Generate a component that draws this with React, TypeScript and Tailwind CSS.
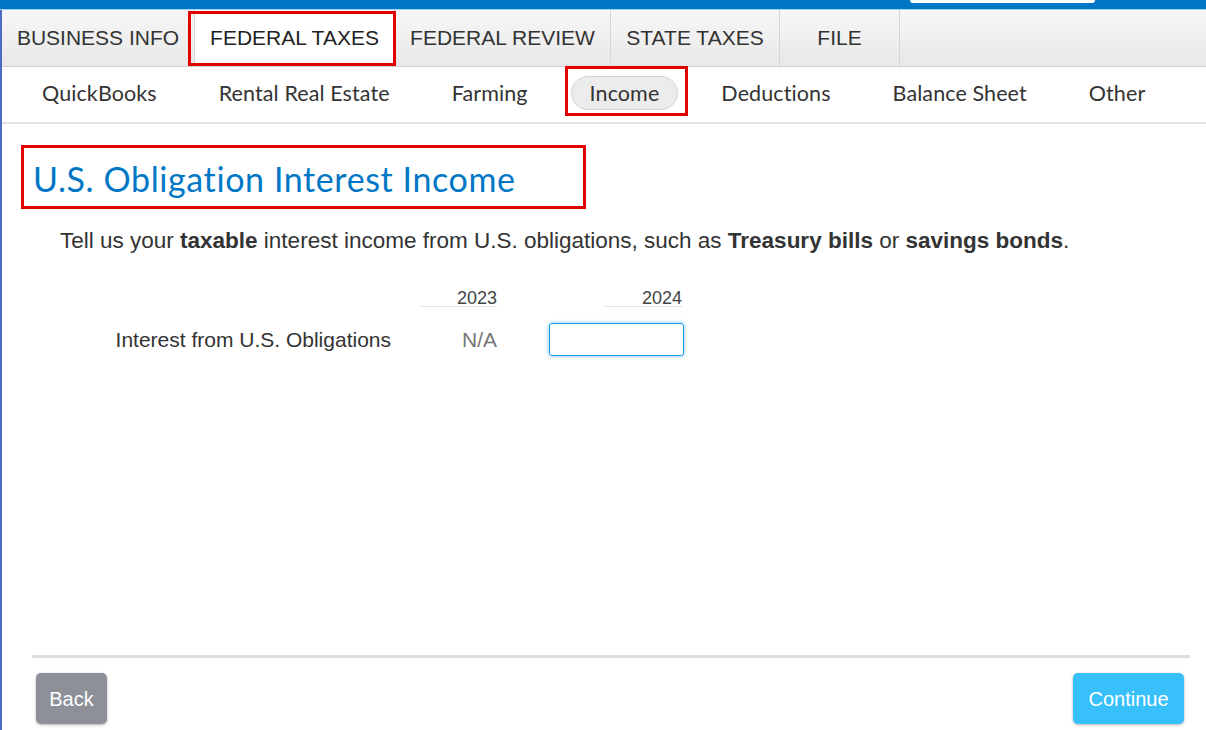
import React from "react";

const tabs = [
  { label: "BUSINESS INFO", w: "w-[193px]" },
  { label: "FEDERAL TAXES", w: "w-[200px]", active: true },
  { label: "FEDERAL REVIEW", w: "w-[216px]" },
  { label: "STATE TAXES", w: "w-[169px]" },
  { label: "FILE", w: "w-[120px]" },
];

const subNav = [
  "QuickBooks",
  "Rental Real Estate",
  "Farming",
  "Income",
  "Deductions",
  "Balance Sheet",
  "Other",
];

export default function App() {
  return (
    <div className="relative h-[730px] w-full overflow-hidden bg-white font-['Liberation_Sans',Arial,sans-serif] text-[#333]">
      {/* top bar */}
      <div className="relative h-[9px] bg-[#0077c5]">
        <div className="absolute left-[910px] top-0 h-[3px] w-[185px] rounded-b-md bg-white" />
      </div>
      <div className="h-px bg-[#a6d3f2]" />

      <div className="flex h-[720px] flex-col border-l-2 border-[#4a6dbf]">
        {/* main tabs */}
        <div className="flex h-[57px] border-b border-[#d2d2d2] bg-gradient-to-b from-[#f7f7f7] to-[#e8e8e8]">
          {tabs.map((t) => (
            <div
              key={t.label}
              className={`relative flex items-center justify-center border-r border-[#d6d6d6] text-[21px] ${t.w} ${
                t.active ? "bg-white text-[#222]" : "text-[#333]"
              }`}
            >
              {t.label}
              {t.active && (
                <div className="absolute -left-[7px] right-[-2px] top-px bottom-0 border-[3px] border-[#e00000]" />
              )}
            </div>
          ))}
        </div>

        {/* sub nav */}
        <div className="flex h-[57px] items-center gap-[24px] border-b-2 border-[#e2e2e2] pb-[3px] pl-[21px] font-['Lato',sans-serif] text-[21.5px] tracking-[0.1px] text-[#333]">
          {subNav.map((s) =>
            s === "Income" ? (
              <div key={s} className="relative">
                <div className="flex h-[34px] items-center rounded-full border border-[#d4d4d4] bg-[#ececec] px-[18px]">
                  {s}
                </div>
                <div className="absolute -left-[6px] -right-[10px] -top-[10px] -bottom-[6px] border-[3px] border-[#e00000]" />
              </div>
            ) : (
              <div key={s} className="px-[19px]">
                {s}
              </div>
            )
          )}
        </div>

        {/* content */}
        <div className="flex-1 pl-[19px] pt-[21px]">
          <div className="relative inline-block">
            <h1 className="w-[565px] pb-[10px] pl-[12px] pt-[14px] font-['Lato',sans-serif] text-[34px] leading-[40px] tracking-[0.6px] text-[#0077c5]">
              U.S. Obligation Interest Income
            </h1>
            <div className="absolute inset-0 border-[3px] border-[#e00000]" />
          </div>

          <p className="mt-[15px] pl-[39px] text-[22.5px] text-[#333]">
            Tell us your <b>taxable</b> interest income from U.S. obligations, such as{" "}
            <b>Treasury bills</b> or <b>savings bonds</b>.
          </p>

          <div className="mt-[32px] flex flex-col">
            <div className="flex items-end">
              <div className="w-[399px]" />
              <div className="w-[77px] border-b border-[#e3e3e3] text-right text-[18px] leading-[16px] text-[#444]">
                2023
              </div>
              <div className="w-[108px]" />
              <div className="w-[77px] border-b border-[#e3e3e3] text-right text-[18px] leading-[16px] text-[#444]">
                2024
              </div>
            </div>
            <div className="mt-[16px] flex items-center">
              <div className="w-[370px] text-right text-[21px] text-[#333]">
                Interest from U.S. Obligations
              </div>
              <div className="ml-[29px] w-[77px] text-right text-[21px] text-[#777]">N/A</div>
              <input
                className="ml-[52px] h-[33px] w-[135px] rounded-[3px] border border-[#1a9be6] shadow-[0_0_4px_rgba(26,155,230,0.6)] outline-none"
                aria-label="Interest from U.S. Obligations 2024"
              />
            </div>
          </div>
        </div>

        {/* footer */}
        <div className="pl-[30px] pr-[16px]">
          <div className="h-[3px] bg-[#dedede]" />
          <div className="flex items-start justify-between px-[4px] pr-[6px] pt-[15px] pb-[6px]">
            <button className="h-[51px] w-[71px] rounded-[5px] bg-[#8d9098] text-[20px] text-white shadow-[0_1px_3px_rgba(0,0,0,0.3)]">
              Back
            </button>
            <button className="h-[51px] w-[111px] rounded-[5px] bg-[#38c0fb] text-[20px] text-white shadow-[0_1px_3px_rgba(0,0,0,0.3)]">
              Continue
            </button>
          </div>
        </div>
      </div>
    </div>
  );
}
